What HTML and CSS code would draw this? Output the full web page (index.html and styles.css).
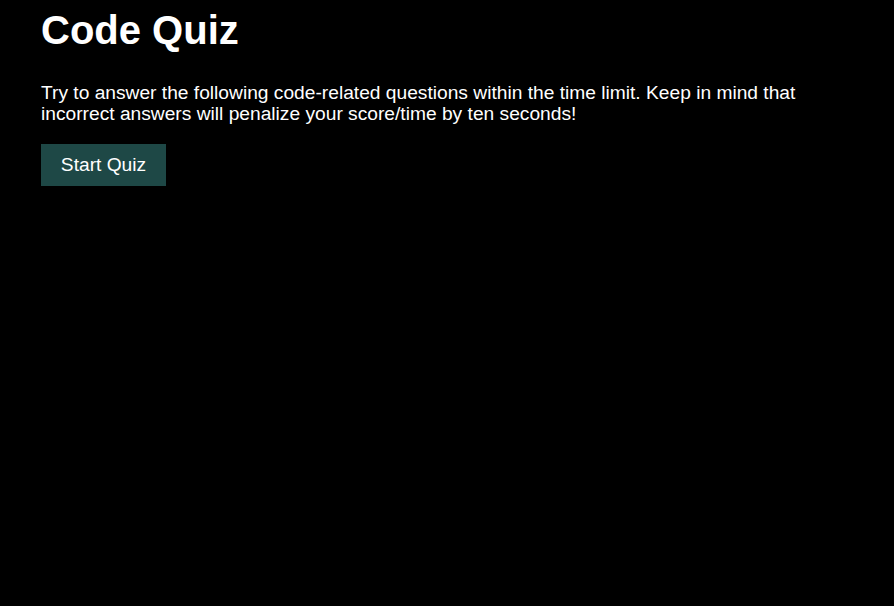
FILE: index.html
```html
<!DOCTYPE html>
<html>
<head>
<meta charset="utf-8">
<link rel="stylesheet" href="styles.css">
</head>
<body>
<main class="quiz">
  <h1 class="title">Code Quiz</h1>
  <p class="intro">Try to answer the following code-related questions within the time limit. Keep in mind that incorrect answers will penalize your score/time by ten seconds!</p>
  <button class="start">Start Quiz</button>
</main>
</body>
</html>
```
FILE: styles.css
```css
html, body {
  background: #000;
}
body {
  margin: 0;
  padding: 8px 41px;
  color: #fff;
  font-family: "Liberation Sans", Arial, sans-serif;
}
.quiz {
  width: 800px;
}
.title {
  font-size: 40px;
  font-weight: bold;
  margin: 0 0 29px;
}
.intro {
  font-size: 19.2px;
  line-height: 21px;
  margin: 0 0 20px;
}
.start {
  display: block;
  background: #1e4846;
  color: #fff;
  border: none;
  font-family: "Liberation Sans", Arial, sans-serif;
  font-size: 19.2px;
  padding: 0;
  width: 125px;
  height: 42px;
  cursor: pointer;
}
```
